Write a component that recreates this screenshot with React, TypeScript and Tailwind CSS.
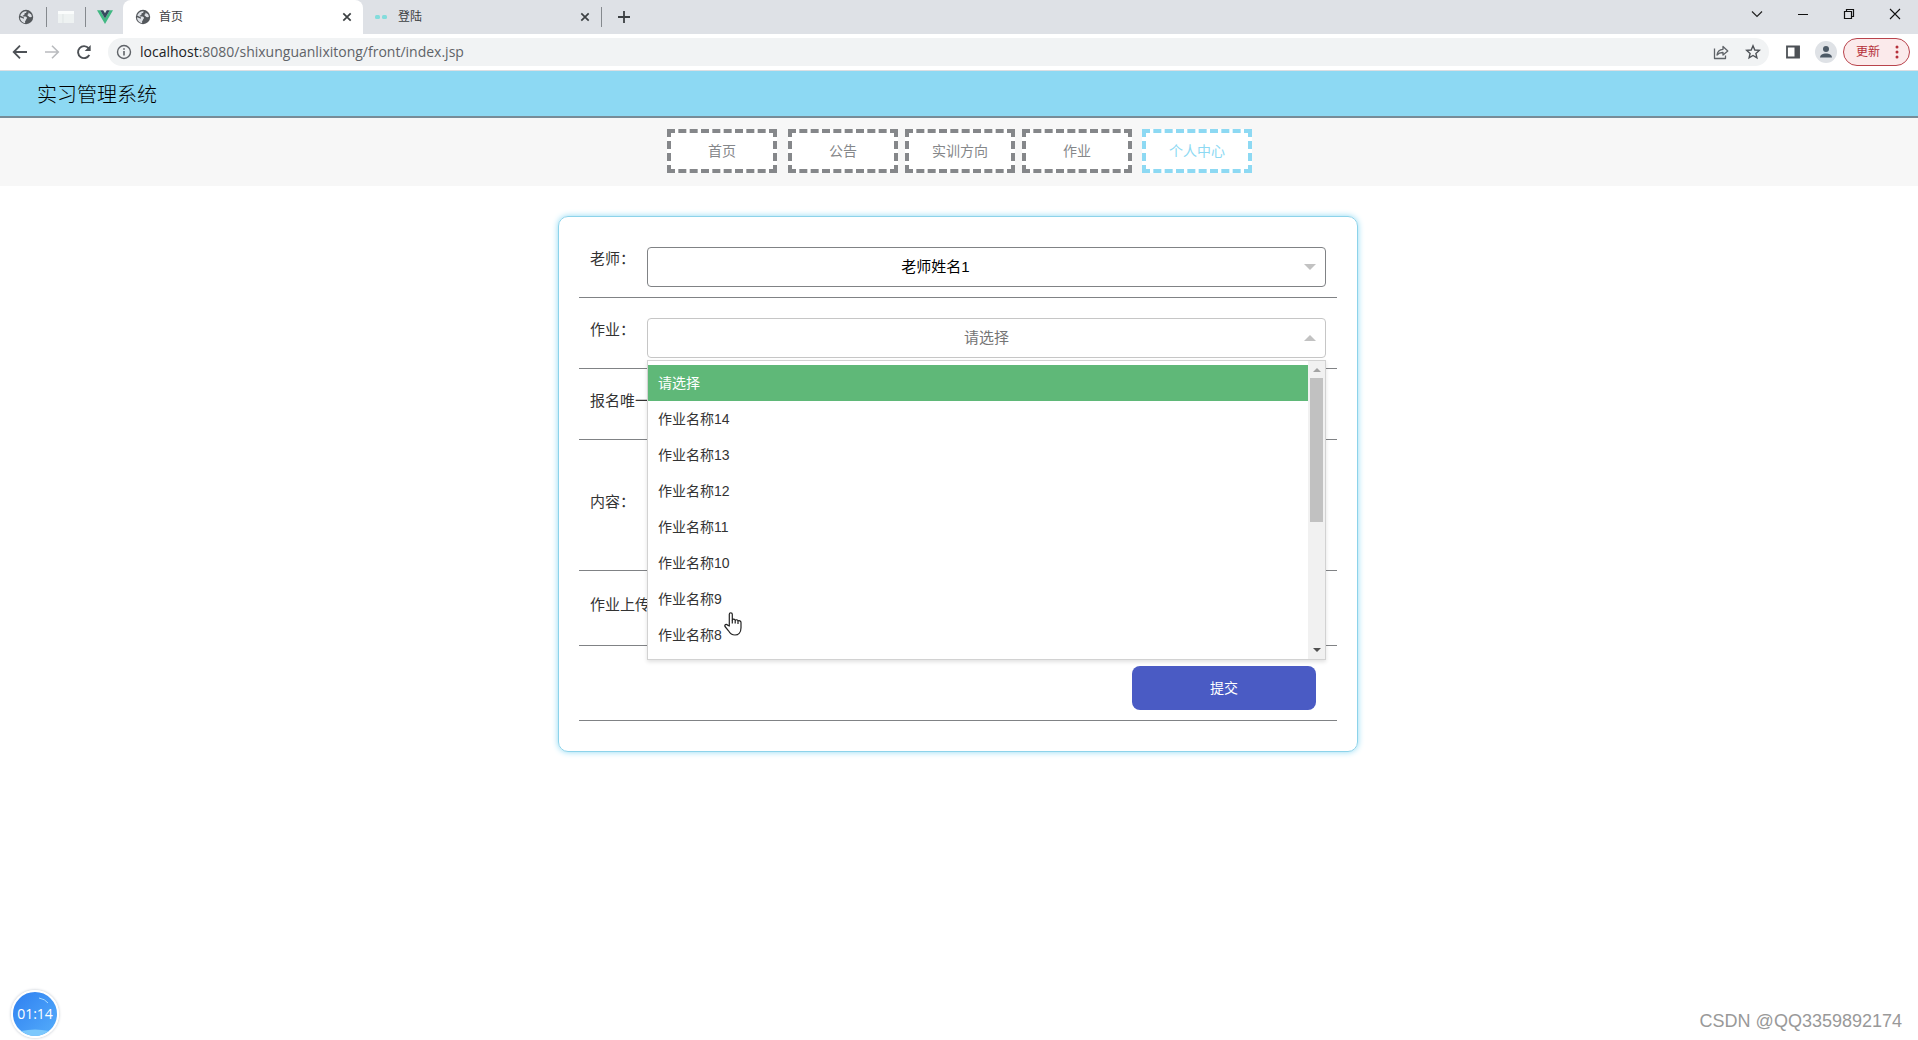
import { ReactNode, useState } from 'react';

const assignments = [
  '请选择',
  '作业名称14',
  '作业名称13',
  '作业名称12',
  '作业名称11',
  '作业名称10',
  '作业名称9',
  '作业名称8',
];

const navItems = [
  { label: '首页', className: 'mr-1 border-[#85878a] text-[#85878a]' },
  { label: '公告', className: 'border-[#85878a] text-[#85878a]' },
  { label: '实训方向', className: 'border-[#85878a] text-[#85878a]' },
  { label: '作业', className: 'border-[#85878a] text-[#85878a]' },
  { label: '个人中心', className: 'ml-[3px] border-[#8dd9f3] text-[#8dd9f3]' },
];

function Globe() {
  return (
    <svg className="size-4 shrink-0" viewBox="0 0 16 16" aria-hidden="true">
      <circle cx="8" cy="8" r="7.2" fill="#54585c" />
      <path
        d="M8.6 2.2c-.2 1-.2 1.700-1.200 1.900-1 .2-1 .9-1 1.500 0 .7-.8.7-1.400.9-.5.2-.2.900.4 1 1.200.1 3.300-.2 3.600 1.200.2 1-.9 1-1 2-.1.900-.9 1.200-1 2.200 0 .4.100.8.3 1.100C4.600 14.100 2 11.500 2 8.200l4 1.600 0-1.400L2.200 6.600C2.900 4.100 5.500 2 8.600 2.200z"
        fill="#dee1e6"
      />
      <path d="M10.200 3.600 13 5.200c.6.900.8 1.800.8 2.800l-1.700.3c-1-.1-1.200-1-2-1.300-.8-.4-.9-1.500.1-1.700.7-.2.100-1.100 0-1.700z" fill="#dee1e6" />
    </svg>
  );
}

function Cross({ label }: { label: string }) {
  return (
    <button type="button" aria-label={label} className="flex size-4 items-center justify-center">
      <svg className="size-4" viewBox="0 0 16 16" stroke="#3c4043" strokeWidth="1.7">
        <path d="M4.300 4.300l7.400 7.400M11.700 4.300l-7.400 7.400" />
      </svg>
    </button>
  );
}

function IconButton({ label, className, children }: { label: string; className: string; children: ReactNode }) {
  return (
    <button type="button" aria-label={label} className={`flex shrink-0 items-center justify-center ${className}`}>
      {children}
    </button>
  );
}

function TabStrip() {
  return (
    <div className="flex h-[34px] items-center bg-[#dee1e6]">
      <div className="flex w-[46px] justify-end pr-3">
        <Globe />
      </div>
      <div className="h-5 w-px bg-[#85898e]" />
      <div className="flex w-[38px] justify-center">
        <svg className="size-4" viewBox="0 0 16 16" aria-hidden="true">
          <path d="M0 2h16v12H0z" fill="#eef2f2" />
          <path d="M0 2h16v3H0z" fill="#fafcfc" />
          <path d="M5 5v9" stroke="#dfe5e5" />
        </svg>
      </div>
      <div className="h-5 w-px bg-[#85898e]" />
      <div className="flex w-[37px] justify-center">
        <svg className="size-4" viewBox="0 0 16 16" aria-hidden="true">
          <path d="M0 1.200h3.200L8 9.400l4.800-8.200H16L8 15z" fill="#41b883" />
          <path d="M3.200 1.200h3L8 4.300l1.800-3.100h3L8 9.400z" fill="#35495e" />
        </svg>
      </div>
      <div className="flex h-full w-60 items-center rounded-t-lg bg-white pr-2 pl-3">
        <Globe />
        <span className="ml-2 flex-1 text-xs text-[#3c4043]">首页</span>
        <Cross label="关闭首页" />
      </div>
      <div className="flex h-full w-[238px] items-center px-2">
        <svg className="mx-1 h-3 w-3 shrink-0" viewBox="0 0 12 12" fill="#83dcdc" aria-hidden="true">
          <rect x="0" y="4" width="5" height="4" rx="1.500" />
          <rect x="7" y="4" width="5" height="4" rx="1.500" />
        </svg>
        <span className="ml-[7px] flex-1 text-xs text-[#3c4043]">登陆</span>
        <Cross label="关闭登陆" />
      </div>
      <div className="h-5 w-px bg-[#85898e]" />
      <IconButton label="新标签页" className="ml-3.5 size-4">
        <svg className="size-4" viewBox="0 0 16 16" stroke="#3c4043" strokeWidth="1.800">
          <path d="M8 2v12M2 8h12" />
        </svg>
      </IconButton>
      <div className="mb-1.5 ml-auto flex">
        <IconButton label="搜索标签页" className="w-[46px]">
          <svg className="size-3.5" viewBox="0 0 14 14" fill="none" stroke="#222" strokeWidth="1.200">
            <path d="M2 4.500l5 5 5-5" />
          </svg>
        </IconButton>
        <IconButton label="最小化" className="w-[46px]">
          <svg className="size-3.5" viewBox="0 0 14 14" stroke="#111">
            <path d="M2 7.500h10" />
          </svg>
        </IconButton>
        <IconButton label="还原" className="w-[46px]">
          <svg className="size-3.5" viewBox="0 0 14 14" fill="none" stroke="#111" strokeWidth="1.200">
            <path d="M2.500 4.500h7v7h-7zM4.500 4.500v-2h7v7h-2" />
          </svg>
        </IconButton>
        <IconButton label="关闭" className="w-[46px]">
          <svg className="size-3.5" viewBox="0 0 14 14" stroke="#111" strokeWidth="1.100">
            <path d="M2 2l10 10M12 2L2 12" />
          </svg>
        </IconButton>
      </div>
    </div>
  );
}

function Toolbar() {
  return (
    <div className="flex h-[37px] items-center border-b border-[#dcdfe3] bg-white">
      <IconButton label="后退" className="ml-3 size-4">
        <svg className="size-4" viewBox="0 0 16 16" fill="none" stroke="#4d5156" strokeWidth="1.800">
          <path d="M15 8H2M8 1.700L1.700 8 8 14.300" />
        </svg>
      </IconButton>
      <IconButton label="前进" className="ml-4 size-4">
        <svg className="size-4" viewBox="0 0 16 16" fill="none" stroke="#b9bbbe" strokeWidth="1.600">
          <path d="M1 8h13M8 1.700L14.300 8 8 14.300" />
        </svg>
      </IconButton>
      <IconButton label="重新加载" className="ml-4 size-4">
        <svg className="size-4" viewBox="0 0 16 16">
          <path d="M13.300 11A6 6 0 1 1 12.600 4.200" fill="none" stroke="#4d5156" strokeWidth="1.900" />
          <path d="M14.700 1v6H8.700z" fill="#4d5156" />
        </svg>
      </IconButton>
      <div className="ml-4 flex h-7 flex-1 items-center rounded-full bg-[#f1f3f4] px-2">
        <svg className="size-4 shrink-0" viewBox="0 0 16 16" fill="none" stroke="#5f6368" strokeWidth="1.400" aria-hidden="true">
          <circle cx="8" cy="8" r="6.500" />
          <path d="M8 7v4.500M8 4.200v1.600" strokeWidth="1.600" />
        </svg>
        <a href="#address" className="ml-2 font-['Open_Sans',sans-serif] text-sm text-[#5f6368]">
          <span className="text-[#202124]">localhost</span>:8080/shixunguanlixitong/front/index.jsp
        </a>
        <IconButton label="分享" className="ml-auto size-4">
          <svg className="size-4" viewBox="0 0 16 16" fill="none" stroke="#5f6368" strokeWidth="1.300" strokeLinejoin="round">
            <path d="M1.500 4.500v10h11v-3" />
            <path d="M4 11c.4-3.700 2.500-5.500 6-5.700V2.500L14.800 7 10 11V8.500C7.500 8.400 5.500 9.200 4 11z" />
          </svg>
        </IconButton>
        <IconButton label="收藏" className="ml-4 size-4">
          <svg className="size-4" viewBox="0 0 16 16" fill="none" stroke="#4d5156" strokeWidth="1.400">
            <path d="M8 1.800l1.800 4.200 4.500.4-3.400 3 1 4.400L8 11.500l-3.900 2.300 1-4.400-3.400-3 4.500-.4z" />
          </svg>
        </IconButton>
      </div>
      <IconButton label="侧边栏" className="ml-4 size-4">
        <svg className="size-4" viewBox="0 0 16 16">
          <path d="M2 2.500h12v11H2z" fill="none" stroke="#4d5156" strokeWidth="1.800" />
          <path d="M9.500 2h5v12h-5z" fill="#4d5156" />
        </svg>
      </IconButton>
      <IconButton label="个人资料" className="ml-3.5 size-[22px] rounded-full bg-[#dfe2e6]">
        <svg className="size-4" viewBox="0 0 16 16" fill="#4d5a66">
          <circle cx="8" cy="5" r="3" />
          <path d="M2 13.500c0-5.500 12-5.500 12 0z" />
        </svg>
      </IconButton>
      <button
        type="button"
        className="mr-2 ml-1.5 flex h-7 w-[67px] items-center justify-between rounded-full border border-[#b9434c] bg-[#fbeaeb] pr-2.5 pl-3 text-xs text-[#b5303a]"
      >
        更新
        <svg className="h-4 w-1" viewBox="0 0 4 16" fill="#b5303a" aria-hidden="true">
          <circle cx="2" cy="3" r="1.500" />
          <circle cx="2" cy="8" r="1.500" />
          <circle cx="2" cy="13" r="1.500" />
        </svg>
      </button>
    </div>
  );
}

function ScrollTrack() {
  return (
    <div className="flex w-[17px] flex-col items-center bg-[#f1f1f1]" aria-hidden="true">
      <svg className="h-[17px] w-2" viewBox="0 0 8 17">
        <path d="M0 11l4-4 4 4z" fill="#a3a3a3" />
      </svg>
      <div className="h-36 w-[13px] bg-[#c1c1c1]" />
      <svg className="mt-auto h-[17px] w-2" viewBox="0 0 8 17">
        <path d="M0 6h8l-4 4z" fill="#505050" />
      </svg>
    </div>
  );
}

function HandPointer() {
  return (
    <svg className="absolute top-[251px] left-[76px] h-6 w-[18px]" viewBox="0 0 18 24" fill="#fff" stroke="#222" strokeWidth="1.200" strokeLinejoin="round" aria-hidden="true">
      <path d="M5.300 14V2.300c0-2 3-2 3 0V8c.5-1.300 2.600-1.200 2.900.4.700-1.100 2.500-.8 2.800.7.900-.8 3-.3 3 1.500v5.200c0 4.300-2.500 7.200-6 7.200-3.200 0-5-1.500-6.500-4.200L1 14.500c-.8-1.700 1.300-2.800 2.600-1.400z" />
      <path d="M8.300 8v3.500M11.200 8.500v3M14 9.300v2.700" />
    </svg>
  );
}

function AssignmentMenu({ value, onPick }: { value: string; onPick: (name: string) => void }) {
  return (
    <div className="absolute top-[42px] left-0 z-10 flex h-[300px] w-full border border-[#d2d2d2] bg-white shadow-[0_2px_4px_rgba(0,0,0,0.12)]">
      <div role="listbox" aria-label="作业选项" className="flex-1 py-1">
        {assignments.map((name) => (
          <button
            key={name}
            type="button"
            role="option"
            aria-selected={name === value}
            onClick={() => onPick(name)}
            className="block h-9 w-full px-2.5 text-left text-sm text-[#333] aria-selected:bg-[#5fb878] aria-selected:text-white"
          >
            {name}
          </button>
        ))}
      </div>
      <ScrollTrack />
      <HandPointer />
    </div>
  );
}

function Row({ className, children }: { className: string; children: ReactNode }) {
  return <div className={`flex border-b border-[#808285] pr-[11px] pl-[11px] ${className}`}>{children}</div>;
}

const labelClass = 'w-[57px] shrink-0 whitespace-nowrap text-[15px] leading-6 text-[#333]';

export default function App() {
  const [picked, setPicked] = useState('请选择');

  return (
    <div className="relative min-h-screen bg-white font-['Liberation_Sans','Noto_Sans_CJK_SC',sans-serif]">
      <TabStrip />
      <Toolbar />
      <header className="flex h-[47px] items-center border-b-2 border-[#778c98] bg-[#8dd9f3] px-[37px] pt-0.5">
        <h1 className="text-xl font-light text-black">实习管理系统</h1>
      </header>
      <nav className="flex justify-center gap-[7px] bg-[#f7f7f7] pt-[11px] pb-[13px] pl-px">
        {navItems.map((item) => (
          <a
            key={item.label}
            href="#nav"
            className={`flex h-11 w-[110px] items-center justify-center border-4 border-dashed bg-white text-sm ${item.className}`}
          >
            {item.label}
          </a>
        ))}
      </nav>
      <main className="pt-[30px] pr-0.5">
        <form
          className="mx-auto max-w-[800px] rounded-[10px] border border-[#8dd3ea] px-5 pt-2.5 pb-[30px] shadow-[0_0_6px_#8dd9f3]"
          onSubmit={(event) => event.preventDefault()}
        >
          <Row className="h-[71px] pt-5">
            <label htmlFor="teacher" className={labelClass}>老师：</label>
            <div className="relative h-10 flex-1">
              <select
                id="teacher"
                className="h-full w-full appearance-none rounded border border-[#808285] bg-white pr-[112px] pl-2.5 text-center text-[15px] text-black [text-align-last:center]"
              >
                <option>老师姓名1</option>
              </select>
              <svg className="absolute top-[17px] right-2.5 h-1.5 w-3" viewBox="0 0 12 6" fill="#c2c2c2" aria-hidden="true">
                <path d="M0 0h12L6 6z" />
              </svg>
            </div>
          </Row>
          <Row className="h-[71px] pt-5">
            <label htmlFor="assignment" className={labelClass}>作业：</label>
            <div className="relative h-10 flex-1">
              <select
                id="assignment"
                value={picked}
                onChange={(event) => setPicked(event.target.value)}
                className="h-full w-full appearance-none rounded-sm border border-[#c6c6c6] bg-white px-2.5 text-center text-[15px] text-[#757575] [text-align-last:center]"
              >
                {assignments.map((name) => (
                  <option key={name}>{name}</option>
                ))}
              </select>
              <svg className="absolute top-[17px] right-2.5 h-1.5 w-3" viewBox="0 0 12 6" fill="#c2c2c2" aria-hidden="true">
                <path d="M0 6h12L6 0z" />
              </svg>
              <AssignmentMenu value={picked} onPick={setPicked} />
            </div>
          </Row>
          <Row className="h-[71px] pt-5">
            <span className={labelClass}>报名唯一</span>
          </Row>
          <Row className="h-[131px] items-center pb-1.5">
            <span className={labelClass}>内容：</span>
          </Row>
          <Row className="h-[75px] items-center pb-1.5">
            <span className={labelClass}>作业上传</span>
          </Row>
          <Row className="h-[75px] items-end justify-end pb-2.5">
            <button type="submit" className="mr-2.5 h-11 w-[184px] rounded-lg bg-[#4a5bc4] text-sm text-white">
              提交
            </button>
          </Row>
        </form>
      </main>
      <div className="absolute bottom-0.5 left-[11px] flex size-12 items-center justify-center rounded-full border-2 border-white bg-linear-to-br from-[#2f7ff0] to-[#55adfb] font-['Open_Sans',sans-serif] text-sm text-white shadow-[0_0_3px_#b8bfc8]">
        <svg className="absolute inset-0 size-full" viewBox="0 0 44 44" fill="none" aria-hidden="true">
          <path d="M26 6q6 1 9 5" stroke="#a9dcff" strokeWidth="1" />
          <path d="M8 39q14-3 28 0-14 10-28 0z" fill="#7cc8fc" />
        </svg>
        <span className="relative">01:14</span>
      </div>
      <div className="absolute right-4 bottom-[5px] text-lg text-[#999]">CSDN @QQ3359892174</div>
    </div>
  );
}
